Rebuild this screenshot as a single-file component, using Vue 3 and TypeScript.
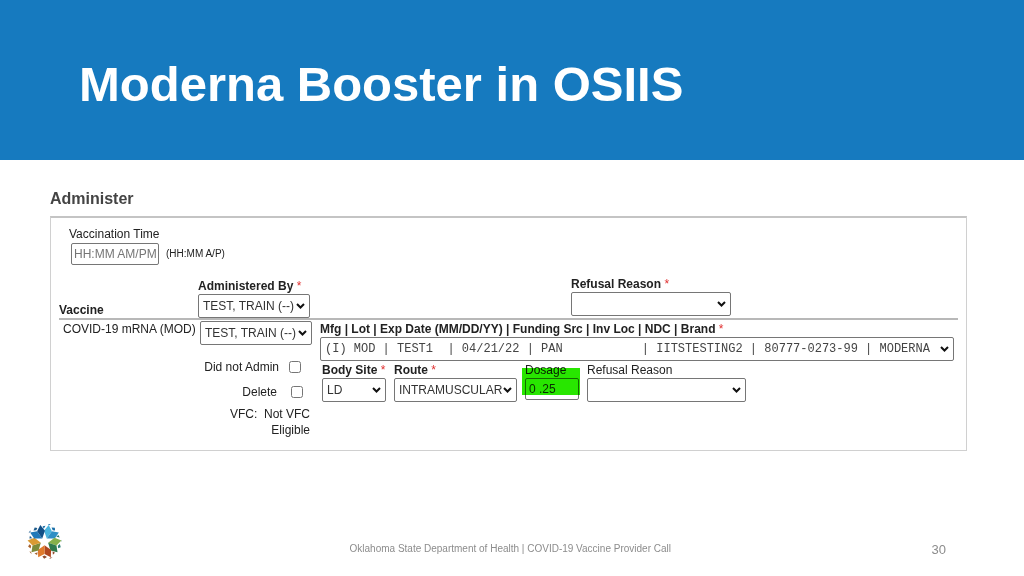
<script setup lang="ts">
import { ref } from 'vue'

interface Petal {
  angle: number
  light: string
  dark: string
  chip: string
}

const petals: Petal[] = [
  { angle: 36, light: '#2f8fc4', dark: '#49b4de', chip: '#1b6fa8' },
  { angle: 108, light: '#2f7a4c', dark: '#86b04a', chip: '#2b7b74' },
  { angle: 180, light: '#df7a2c', dark: '#b0471f', chip: '#8f4a2c' },
  { angle: 252, light: '#d99a33', dark: '#7d8a3a', chip: '#a8622c' },
  { angle: 324, light: '#124f86', dark: '#2079b8', chip: '#1f5c8c' },
]

const nb = '\u00a0'
const lot = [
  '(I) MOD | TEST1  | 04/21/22 | PAN           ',
  '| IITSTESTING2 | 80777-0273-99 | MODERNA',
].join('').replace(/ /g, nb)

const time = ref('')
const dosage = ref('0 .25')
const notAdmin = ref(false)
const remove = ref(false)
</script>

<template>
  <div class="slide">
    <header class="banner">
      <h1>Moderna Booster in OSIIS</h1>
    </header>

    <main>
      <h2>Administer</h2>
      <form class="panel" @submit.prevent>
        <div class="time">
          <label for="time">Vaccination Time</label>
          <div class="time-row">
            <input id="time" v-model="time" type="text" placeholder="HH:MM AM/PM">
            <small>(HH:MM A/P)</small>
          </div>
        </div>

        <div class="heads">
          <strong class="vaccine">Vaccine</strong>
          <div class="field by">
            <label for="by-all" class="strong">Administered By <i>*</i></label>
            <select id="by-all"><option>TEST, TRAIN (--)</option></select>
          </div>
          <div class="field refusal">
            <label for="refusal-all" class="strong">Refusal Reason <i>*</i></label>
            <select id="refusal-all"><option></option></select>
          </div>
        </div>

        <div class="entry">
          <span class="name">COVID-19 mRNA (MOD)</span>
          <div class="who">
            <select aria-label="Administered by"><option>TEST, TRAIN (--)</option></select>
            <label class="tick first">Did not Admin <input v-model="notAdmin" type="checkbox"></label>
            <label class="tick">Delete <input v-model="remove" type="checkbox"></label>
            <p>VFC:&nbsp; Not VFC<br>Eligible</p>
          </div>
          <div class="details">
            <div class="field">
              <label for="lot" class="strong">Mfg | Lot | Exp Date (MM/DD/YY) | Funding Src | Inv Loc | NDC | Brand <i>*</i></label>
              <select id="lot" class="mono"><option>{{ lot }}</option></select>
            </div>
            <div class="dose-row">
              <div class="field site">
                <label for="site" class="strong">Body Site <i>*</i></label>
                <select id="site"><option>LD</option></select>
              </div>
              <div class="field route">
                <label for="route" class="strong">Route <i>*</i></label>
                <select id="route"><option>INTRAMUSCULAR</option></select>
              </div>
              <div class="field dosage">
                <label for="dosage">Dosage</label>
                <input id="dosage" v-model="dosage" type="text">
              </div>
              <div class="field reason">
                <label for="reason">Refusal Reason</label>
                <select id="reason"><option></option></select>
              </div>
            </div>
          </div>
        </div>
      </form>
    </main>

    <footer>
      <svg class="logo" viewBox="-50 -50 100 100" aria-hidden="true">
        <g v-for="p in petals" :key="p.angle" :transform="`rotate(${p.angle})`">
          <path d="M0-11L-19-24L-18-45L0-36Z" :fill="p.dark" />
          <path d="M0-11L19-24L18-45L0-36Z" :fill="p.light" />
          <path d="M-7-44L1-49L6-43L0-40ZM-24-38L-30-32L-23-28ZM-23-46L-14-50L-16-46Z" :fill="p.chip" />
        </g>
      </svg>
      <span class="org">Oklahoma State Department of Health | COVID-19 Vaccine Provider Call</span>
      <span class="page">30</span>
    </footer>
  </div>
</template>

<style>
body {
  margin: 0;
  background: #fff;
}
</style>

<style scoped>
.slide {
  box-sizing: border-box;
  min-height: 100vh;
  display: flex;
  flex-direction: column;
  font: 12px/16px "Liberation Sans", Arial, sans-serif;
  color: #222;
}
.banner {
  background: #167abf;
  padding: 56px 79px 48px;
}
h1 {
  margin: 0;
  font-size: 49px;
  line-height: 56px;
  color: #fff;
}
main {
  padding: 29px 57px 0 50px;
}
h2 {
  margin: 0 0 7px;
  font-size: 16px;
  line-height: 20px;
  color: #444;
}
.panel {
  border: 1px solid #d0d0d0;
  border-top: 2px solid #c4c4c4;
  padding: 8px 8px 12px;
}
.time {
  padding-left: 10px;
}
.time-row {
  display: flex;
  align-items: center;
  gap: 7px;
  padding: 1px 0 0 2px;
}
small {
  font-size: 10px;
}
input,
select {
  box-sizing: border-box;
  margin: 0;
  font: inherit;
  color: #333;
  background: #fff;
  border: 1px solid #767676;
  border-radius: 2px;
}
select {
  appearance: none;
  display: block;
  width: 100%;
  height: 24px;
  padding: 0 4px;
  background: #fff url("data:image/svg+xml,%3Csvg xmlns='http://www.w3.org/2000/svg' width='9' height='6'%3E%3Cpath d='M1 1l3.500 3.500L8 1' fill='none' stroke='%23111' stroke-width='2'/%3E%3C/svg%3E") no-repeat right 4px center;
}
input[type="text"] {
  height: 22px;
  padding: 0 3px;
}
#time {
  width: 88px;
  padding: 0 2px;
}
#time::placeholder {
  color: #757575;
}
.strong {
  font-weight: bold;
}
.field label {
  display: block;
  white-space: nowrap;
}
i {
  font-style: normal;
  font-weight: normal;
  color: #e03030;
}
.heads {
  display: flex;
  align-items: flex-end;
  margin-top: 11px;
  border-bottom: 2px solid #b8b8b8;
}
.vaccine {
  width: 139px;
}
.by {
  width: 112px;
}
.refusal {
  width: 160px;
  margin: 0 0 2px 261px;
}
.entry {
  display: flex;
}
.name {
  width: 137px;
  padding: 1px 0 0 4px;
  white-space: nowrap;
}
.who {
  width: 112px;
  padding-top: 1px;
  text-align: right;
}
.tick {
  display: flex;
  align-items: center;
  justify-content: flex-end;
  gap: 14px;
  margin: 9px 9px 0 0;
}
.tick.first {
  margin: 14px 11px 0 0;
  gap: 10px;
}
.tick input {
  width: 12px;
  height: 12px;
}
.who p {
  margin: 6px 2px 0 0;
}
.details {
  flex: 1;
  min-width: 0;
  padding: 1px 4px 0 8px;
}
.mono {
  font-family: "Liberation Mono", "Courier New", monospace;
  color: #444;
}
.dose-row {
  display: flex;
  gap: 8px;
  padding: 1px 0 0 2px;
}
.site {
  width: 64px;
}
.route {
  width: 123px;
}
.dosage {
  position: relative;
  width: 54px;
}
.dosage input {
  width: 100%;
}
.dosage::after {
  content: "";
  position: absolute;
  inset: 6px -1px 7px -3px;
  background: #28e600;
  mix-blend-mode: multiply;
  pointer-events: none;
}
.reason {
  width: 159px;
}
footer {
  display: flex;
  align-items: center;
  margin-top: auto;
  padding: 0 78px 17px 27px;
  color: #8c8c8c;
}
.logo {
  width: 35px;
  height: 35px;
}
.org {
  flex: 1;
  padding: 14px 0 0 27px;
  text-align: center;
  font-size: 10px;
}
.page {
  padding-top: 16px;
  font-size: 13px;
}
</style>
